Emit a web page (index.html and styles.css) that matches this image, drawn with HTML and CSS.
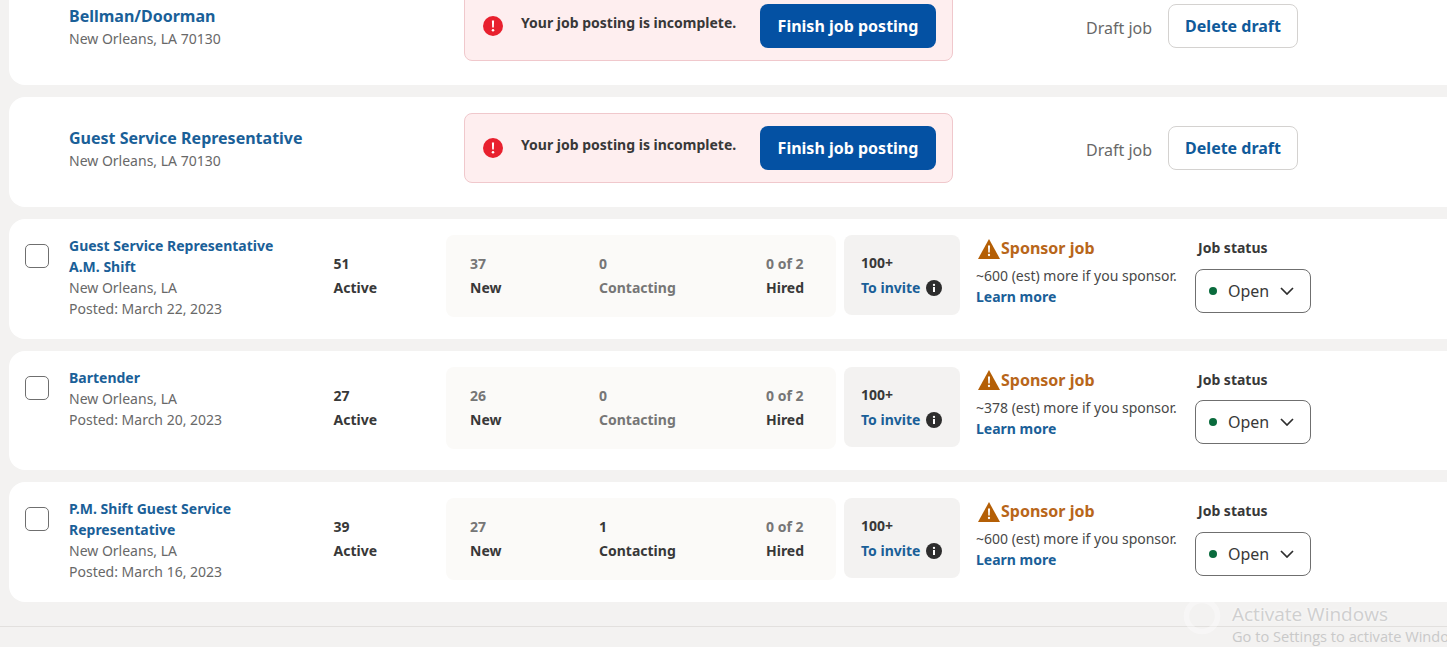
FILE: index.html
```html
<!DOCTYPE html>
<html lang="en">
<head>
<meta charset="utf-8">
<title>Jobs</title>
<link rel="stylesheet" href="styles.css">
</head>
<body>
<main class="list">
  <article class="card draft">
    <div class="draft-title"><a class="title-lg">Bellman/Doorman</a><div class="loc">New Orleans, LA 70130</div></div>
    <div class="alert">
      <svg class="alert-icon" viewBox="0 0 20 20"><circle cx="10" cy="10" r="10" fill="#e8202e"/><path d="M8.9 4.5h2.2l-.3 7h-1.6z" fill="#fff"/><circle cx="10" cy="14.3" r="1.25" fill="#fff"/></svg>
      <span class="alert-text">Your job posting is incomplete.</span>
      <button class="btn-primary">Finish job posting</button>
    </div>
    <span class="draft-label">Draft job</span>
    <button class="btn-outline">Delete draft</button>
  </article>
  <article class="card draft">
    <div class="draft-title"><a class="title-lg">Guest Service Representative</a><div class="loc">New Orleans, LA 70130</div></div>
    <div class="alert">
      <svg class="alert-icon" viewBox="0 0 20 20"><circle cx="10" cy="10" r="10" fill="#e8202e"/><path d="M8.9 4.5h2.2l-.3 7h-1.6z" fill="#fff"/><circle cx="10" cy="14.3" r="1.25" fill="#fff"/></svg>
      <span class="alert-text">Your job posting is incomplete.</span>
      <button class="btn-primary">Finish job posting</button>
    </div>
    <span class="draft-label">Draft job</span>
    <button class="btn-outline">Delete draft</button>
  </article>

  <article class="card job">
    <span class="check"></span>
    <div class="job-title"><a class="title">Guest Service Representative<br>A.M. Shift</a><div class="loc">New Orleans, LA</div><div class="loc">Posted: March 22, 2023</div></div>
    <div class="active"><div>51</div><div>Active</div></div>
    <div class="stats">
      <div class="stat"><div class="muted">37</div><div>New</div></div>
      <div class="stat"><div class="muted">0</div><div class="muted">Contacting</div></div>
      <div class="stat"><div class="muted">0 of 2</div><div>Hired</div></div>
    </div>
    <div class="invite"><div class="invite-num">100+</div><div class="invite-link">To invite <svg class="info" viewBox="0 0 16 16"><circle cx="8" cy="8" r="8" fill="#2d2d2d"/><rect x="7" y="7" width="2" height="5" fill="#fff"/><circle cx="8" cy="4.9" r="1.15" fill="#fff"/></svg></div></div>
    <div class="sponsor">
      <div class="sponsor-head"><svg class="warn" viewBox="0 0 22 20"><path d="M11 0 22 20H0z" fill="#b45f06"/><path d="M10 6.5h2l-.25 7h-1.5z" fill="#fff"/><circle cx="11" cy="16" r="1.15" fill="#fff"/></svg>Sponsor job</div>
      <div class="sponsor-text">~600 (est) more if you sponsor.</div>
      <a class="learn">Learn more</a>
    </div>
    <div class="status">
      <div class="status-label">Job status</div>
      <div class="select"><span class="dot"></span><span class="select-text">Open</span><svg class="chev" viewBox="0 0 14 8"><path d="M1 1l6 6 6-6" fill="none" stroke="#2d2d2d" stroke-width="1.7"/></svg></div>
    </div>
  </article>

  <article class="card job">
    <span class="check"></span>
    <div class="job-title"><a class="title">Bartender</a><div class="loc">New Orleans, LA</div><div class="loc">Posted: March 20, 2023</div></div>
    <div class="active"><div>27</div><div>Active</div></div>
    <div class="stats">
      <div class="stat"><div class="muted">26</div><div>New</div></div>
      <div class="stat"><div class="muted">0</div><div class="muted">Contacting</div></div>
      <div class="stat"><div class="muted">0 of 2</div><div>Hired</div></div>
    </div>
    <div class="invite"><div class="invite-num">100+</div><div class="invite-link">To invite <svg class="info" viewBox="0 0 16 16"><circle cx="8" cy="8" r="8" fill="#2d2d2d"/><rect x="7" y="7" width="2" height="5" fill="#fff"/><circle cx="8" cy="4.9" r="1.15" fill="#fff"/></svg></div></div>
    <div class="sponsor">
      <div class="sponsor-head"><svg class="warn" viewBox="0 0 22 20"><path d="M11 0 22 20H0z" fill="#b45f06"/><path d="M10 6.5h2l-.25 7h-1.5z" fill="#fff"/><circle cx="11" cy="16" r="1.15" fill="#fff"/></svg>Sponsor job</div>
      <div class="sponsor-text">~378 (est) more if you sponsor.</div>
      <a class="learn">Learn more</a>
    </div>
    <div class="status">
      <div class="status-label">Job status</div>
      <div class="select"><span class="dot"></span><span class="select-text">Open</span><svg class="chev" viewBox="0 0 14 8"><path d="M1 1l6 6 6-6" fill="none" stroke="#2d2d2d" stroke-width="1.7"/></svg></div>
    </div>
  </article>

  <article class="card job">
    <span class="check"></span>
    <div class="job-title"><a class="title">P.M. Shift Guest Service<br>Representative</a><div class="loc">New Orleans, LA</div><div class="loc">Posted: March 16, 2023</div></div>
    <div class="active"><div>39</div><div>Active</div></div>
    <div class="stats">
      <div class="stat"><div class="muted">27</div><div>New</div></div>
      <div class="stat"><div>1</div><div>Contacting</div></div>
      <div class="stat"><div class="muted">0 of 2</div><div>Hired</div></div>
    </div>
    <div class="invite"><div class="invite-num">100+</div><div class="invite-link">To invite <svg class="info" viewBox="0 0 16 16"><circle cx="8" cy="8" r="8" fill="#2d2d2d"/><rect x="7" y="7" width="2" height="5" fill="#fff"/><circle cx="8" cy="4.9" r="1.15" fill="#fff"/></svg></div></div>
    <div class="sponsor">
      <div class="sponsor-head"><svg class="warn" viewBox="0 0 22 20"><path d="M11 0 22 20H0z" fill="#b45f06"/><path d="M10 6.5h2l-.25 7h-1.5z" fill="#fff"/><circle cx="11" cy="16" r="1.15" fill="#fff"/></svg>Sponsor job</div>
      <div class="sponsor-text">~600 (est) more if you sponsor.</div>
      <a class="learn">Learn more</a>
    </div>
    <div class="status">
      <div class="status-label">Job status</div>
      <div class="select"><span class="dot"></span><span class="select-text">Open</span><svg class="chev" viewBox="0 0 14 8"><path d="M1 1l6 6 6-6" fill="none" stroke="#2d2d2d" stroke-width="1.7"/></svg></div>
    </div>
  </article>
</main>
<footer class="footer"></footer>
<aside class="watermark">
  <svg class="wm-logo" viewBox="0 0 36 36"><circle cx="18" cy="18" r="14" fill="none" stroke="#fff" stroke-width="5" opacity=".35"/></svg>
  <div class="wm-title">Activate Windows</div>
  <div class="wm-sub">Go to Settings to activate Windows.</div>
</aside>
</body>
</html>
```
FILE: styles.css
```css
* { box-sizing: border-box; }
html, body { margin: 0; height: 100%; }
body {
  position: relative;
  height: 647px;
  overflow: hidden;
  background: #f3f2f1;
  font-family: "Noto Sans", "Open Sans", sans-serif;
  font-size: 14px;
  line-height: 21px;
  color: #383838;
}
.list {
  display: flex;
  flex-direction: column;
  gap: 12px;
  margin: -25px 0 0 9px;
  width: 1500px;
}
.card {
  display: flex;
  background: #fff;
  border-radius: 16px 0 0 16px;
}
.draft {
  height: 110px;
  padding: 16px 0 24px 60px;
  align-items: center;
}
.draft-title { width: 395px; }
.title-lg { display: block; font-size: 16px; line-height: 24px; font-weight: 700; color: #1a6098; }
.loc { color: #686868; }
.alert {
  display: flex;
  align-items: center;
  width: 489px;
  height: 70px;
  padding: 0 16px 0 18px;
  background: #feeeef;
  border: 1px solid #f0c8cc;
  border-radius: 8px;
}
.alert-icon { width: 20px; height: 20px; flex: none; }
.alert-text { margin-left: 18px; padding-bottom: 8px; font-weight: 700; white-space: nowrap; }
.btn-primary, .btn-outline {
  height: 44px;
  border-radius: 8px;
  font: 700 16px/24px "Noto Sans", "Open Sans", sans-serif;
  white-space: nowrap;
}
.btn-primary {
  margin-left: auto;
  width: 176px;
  background: #0451a3;
  border: 0;
  color: #fff;
}
.draft-label {
  margin-left: 133px;
  padding-top: 4px;
  font-size: 16px;
  color: #686868;
  white-space: nowrap;
}
.btn-outline {
  margin-left: 16px;
  width: 130px;
  background: #fff;
  border: 1px solid #d4d2d0;
  color: #0f5a9a;
}
.job {
  height: 119.5px;
  padding: 16px 0 0 16px;
  align-items: flex-start;
}
.check {
  flex: none;
  width: 24px;
  height: 24px;
  margin: 9px 20px 0 0;
  border: 1px solid #6f6f6f;
  border-radius: 5px;
  background: #fff;
}
.job-title { width: 264px; flex: none; }
.title { display: block; font-weight: 700; color: #1a6098; }
.active {
  width: 113px;
  flex: none;
  padding: 17px 0 0 0.5px;
  font-weight: 700;
  line-height: 24px;
}
.stats {
  display: grid;
  grid-template-columns: 129px 167px auto;
  flex: none;
  width: 390px;
  height: 82px;
  padding: 17px 0 0 24px;
  background: #fbfaf8;
  border-radius: 8px;
  font-weight: 700;
  line-height: 24px;
}
.muted { color: #767676; }
.invite {
  flex: none;
  width: 116px;
  height: 80px;
  margin-left: 8px;
  padding: 16px 0 0 17px;
  background: #f3f2f1;
  border-radius: 8px;
  font-weight: 700;
  line-height: 24px;
}
.invite-link { display: flex; align-items: center; gap: 6px; margin-top: 1px; color: #1a6098; white-space: nowrap; }
.info { width: 16px; height: 16px; flex: none; }
.sponsor { flex: none; width: 219px; margin-left: 16px; }
.sponsor-head {
  display: flex;
  align-items: center;
  gap: 1px;
  height: 24px;
  margin-top: 1.5px;
  padding-left: 2px;
  font-size: 16px;
  font-weight: 700;
  color: #b8661a;
}
.warn { width: 22px; height: 20px; flex: none; }
.sponsor-text { margin-top: 4.5px; color: #484848; white-space: nowrap; }
.learn { display: block; font-weight: 700; color: #1a6098; }
.status { flex: none; width: 116px; }
.status-label { margin-top: 2px; padding-left: 3px; font-weight: 700; white-space: nowrap; }
.select {
  display: flex;
  align-items: center;
  width: 116px;
  height: 44px;
  margin-top: 10.5px;
  padding-left: 13px;
  border: 1px solid #6f6f6f;
  border-radius: 8px;
  font-size: 16px;
}
.dot { width: 8px; height: 8px; border-radius: 50%; background: #0a6b3d; flex: none; }
.select-text { margin-left: 11px; padding-top: 1px; }
.chev { width: 14px; height: 8px; margin-left: 11px; flex: none; }
.footer {
  position: absolute;
  left: 0;
  right: 0;
  top: 626px;
  border-top: 1px solid #e2e0de;
}
.watermark {
  position: absolute;
  left: 1232px;
  top: 602px;
  width: 300px;
  white-space: nowrap;
  font-family: "Open Sans", "Noto Sans", sans-serif;
  color: #cfcfcf;
}
.wm-logo { position: absolute; left: -50px; top: -6px; width: 40px; height: 40px; }
.wm-title { font-size: 19px; line-height: 24px; text-shadow: 0 0 3px #fff; }
.wm-sub { font-size: 14.6px; line-height: 21px; color: #c9c9c9; }
```
